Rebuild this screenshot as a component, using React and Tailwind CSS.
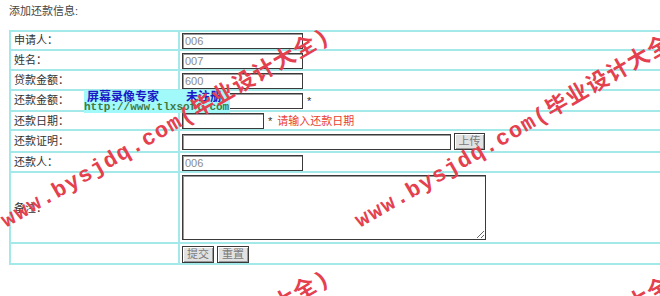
import React from "react";

const inputCls =
  "h-[16px] border border-[#3a3a3a] shadow-[inset_1px_1px_0_#9a9a9a] bg-white px-[2px] text-[11px] leading-[14px] text-[#8a8a8a] outline-none align-middle";
const btnCls =
  "h-[17px] whitespace-nowrap border border-[#3a3a3a] shadow-[inset_1px_1px_0_#ffffff,inset_-1px_-1px_0_#9a9a9a] bg-[#e2e2e2] px-0 text-[11px] leading-[13px] text-[#7a7a7a] align-middle";
const tdL = "border border-[#a3e9ea] pl-[3px] pr-0 py-0 align-middle text-[11px] text-[#333]";
const tdR = "border border-[#a3e9ea] pl-[2px] pr-0 py-0 align-middle text-[11px] text-[#333]";

function Mark({ className }) {
  return (
    <div
      className={
        "absolute pointer-events-none whitespace-nowrap text-[22px] leading-[22px] font-bold tracking-[1.5px] text-[#e4404e] origin-bottom-left rotate-[-30deg] " +
        className
      }
    >
      <span className="font-['Liberation_Mono',monospace]">www.bysjdq.com(</span>
      <span className="font-['Noto_Sans_CJK_SC',sans-serif]">毕业设计大全</span>
      <span className="font-['Liberation_Mono',monospace]">)</span>
    </div>
  );
}

export default function App() {
  return (
    <div className="relative w-[660px] h-[296px] overflow-hidden bg-white font-['Liberation_Sans','Noto_Sans_CJK_SC',sans-serif]">
      <div className="h-[30px] pl-[9px] pt-[3px] text-[11px] leading-[16px] text-[#444]">添加还款信息:</div>
      <table className="ml-[9px] w-[720px] table-fixed border-separate border-spacing-0 border border-[#a3e9ea]">
        <tbody>
          <tr>
            <td className={tdL + " w-[169px] h-[19px]"}>申请人：</td>
            <td className={tdR}>
              <input className={inputCls + " w-[121px]"} value="006" readOnly />
            </td>
          </tr>
          <tr>
            <td className={tdL + " h-[20px]"}>姓名：</td>
            <td className={tdR}>
              <input className={inputCls + " w-[121px]"} value="007" readOnly />
            </td>
          </tr>
          <tr>
            <td className={tdL + " h-[20px]"}>贷款金额：</td>
            <td className={tdR}>
              <input className={inputCls + " w-[121px]"} value="600" readOnly />
            </td>
          </tr>
          <tr>
            <td className={tdL + " h-[21px]"}>还款金额：</td>
            <td className={tdR}>
              <input className={inputCls + " w-[121px]"} value="" readOnly />
              <span className="ml-[4px] align-middle">*</span>
            </td>
          </tr>
          <tr>
            <td className={tdL + " h-[19px]"}>还款日期：</td>
            <td className={tdR}>
              <input className={inputCls + " w-[82px]"} value="" readOnly />
              <span className="ml-[4px] align-middle">*</span>
              <span className="ml-[5px] align-middle text-[#e8402f]">请输入还款日期</span>
            </td>
          </tr>
          <tr>
            <td className={tdL + " h-[22px]"}>还款证明：</td>
            <td className={tdR}>
              <input className={inputCls + " w-[269px]"} value="" readOnly />
              <button className={btnCls + " ml-[3px] w-[31px]"}>上传</button>
            </td>
          </tr>
          <tr>
            <td className={tdL + " h-[20px]"}>还款人：</td>
            <td className={tdR}>
              <input className={inputCls + " w-[121px]"} value="006" readOnly />
            </td>
          </tr>
          <tr>
            <td className={tdL + " h-[71px]"}>备注：</td>
            <td className={tdR}>
              <textarea
                className="block w-[304px] h-[65px] border border-[#3a3a3a] shadow-[inset_1px_1px_0_#9a9a9a] bg-white text-[11px] outline-none"
                readOnly
              />
            </td>
          </tr>
          <tr>
            <td className={tdL + " h-[21px]"}></td>
            <td className={tdR}>
              <button className={btnCls + " w-[32px]"}>提交</button>
              <button className={btnCls + " ml-[3px] w-[32px]"}>重置</button>
            </td>
          </tr>
        </tbody>
      </table>

      <div className="absolute left-[84px] top-[90px] w-[146px] h-[23px] bg-[#a2f9f9]">
        <div className="flex h-[12px] items-center text-[12px] leading-[12px] font-bold text-[#1a1ac8] font-['Noto_Sans_CJK_SC',sans-serif]">
          <span className="ml-[3px]">屏幕录像专家</span>
          <span className="ml-[27px]">未注册</span>
        </div>
        <div className="h-[11px] text-[11px] leading-[11px] font-bold text-[#3e7a3e] font-['Liberation_Mono',monospace]">
          http://www.tlxsoft.com
        </div>
      </div>

      <Mark className="left-[9px] top-[206px]" />
      <Mark className="left-[363px] top-[206px]" />
      <Mark className="left-[9px] top-[448px]" />
      <Mark className="left-[363px] top-[448px]" />
    </div>
  );
}
